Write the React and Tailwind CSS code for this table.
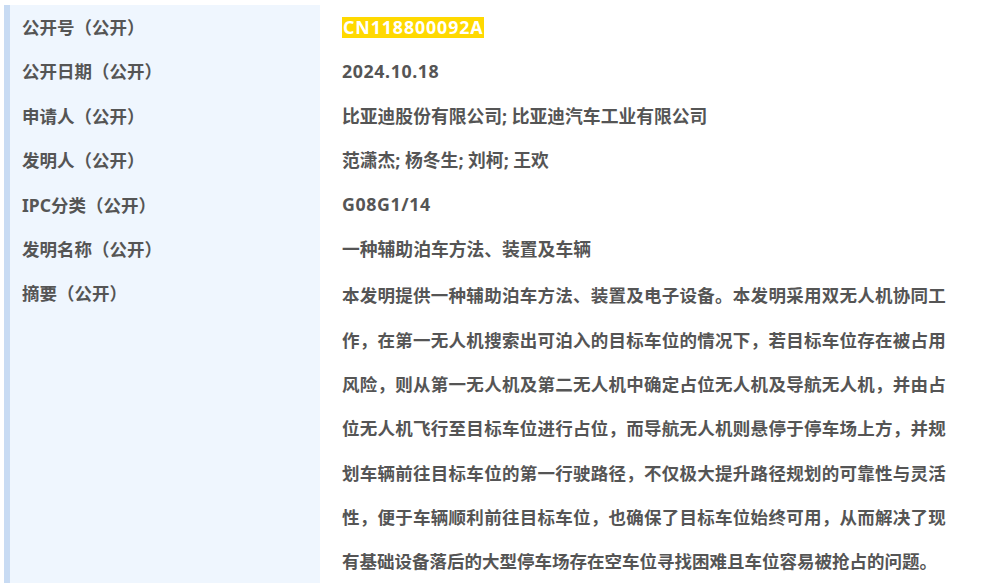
import React from 'react';

const rows = [
    { label: '公开号（公开）', value: 'CN118800092A', highlight: true },
    { label: '公开日期（公开）', value: '2024.10.18', latin: true },
    { label: '申请人（公开）', value: '比亚迪股份有限公司; 比亚迪汽车工业有限公司' },
    { label: '发明人（公开）', value: '范潇杰; 杨冬生; 刘柯; 王欢' },
    { label: 'IPC分类（公开）', value: 'G08G1/14', latin: true },
    { label: '发明名称（公开）', value: '一种辅助泊车方法、装置及车辆' },
];

// abstract split into the lines seen in the screenshot
const abstractLines = [
    '本发明提供一种辅助泊车方法、装置及电子设备。本发明采用双无人机协同工',
    '作，在第一无人机搜索出可泊入的目标车位的情况下，若目标车位存在被占用',
    '风险，则从第一无人机及第二无人机中确定占位无人机及导航无人机，并由占',
    '位无人机飞行至目标车位进行占位，而导航无人机则悬停于停车场上方，并规',
    '划车辆前往目标车位的第一行驶路径，不仅极大提升路径规划的可靠性与灵活',
    '性，便于车辆顺利前往目标车位，也确保了目标车位始终可用，从而解决了现',
    '有基础设备落后的大型停车场存在空车位寻找困难且车位容易被抢占的问题。',
];

const Label = ({ children, grow }) => (
    <div className={`w-[316px] shrink-0 border-l-[6px] border-[#c8dbf3] bg-[#eff6fe] pl-[12px] ${grow ? 'self-stretch' : ''}`}>
        <div className="h-[44.4px] flex items-center">{children}</div>
    </div>
);

export default function App() {
    return (
        <div
            className="w-[1000px] h-[584px] overflow-hidden bg-white pt-[5px] pl-[4px] font-bold text-[17.5px] text-[#555]"
            style={{ fontFamily: '"Noto Sans", "Noto Sans CJK SC", sans-serif' }}
        >
            {rows.map((r) => (
                <div key={r.label} className="flex">
                    <Label>{r.label}</Label>
                    <div className={`h-[44.4px] flex items-center pl-[22px] text-[17.8px] ${r.latin ? 'tracking-[0.6px]' : ''}`}>
                        {r.highlight ? (
                            <span className="inline-block bg-[#ffd900] text-white leading-[21px] pl-[1px] tracking-[0.9px]">{r.value}</span>
                        ) : (
                            r.value
                        )}
                    </div>
                </div>
            ))}
            <div className="flex">
                <Label grow>摘要（公开）</Label>
                <div className="pl-[22px] w-[626px] pt-[2px]">
                    {abstractLines.map((line, i) => (
                        <div
                            key={i}
                            className={`h-[44.3px] flex items-center ${i < abstractLines.length - 1 ? 'justify-between' : ''}`}
                        >
                            {i < abstractLines.length - 1
                                ? Array.from(line).map((c, j) => <span key={j}>{c}</span>)
                                : line}
                        </div>
                    ))}
                </div>
            </div>
        </div>
    );
}
